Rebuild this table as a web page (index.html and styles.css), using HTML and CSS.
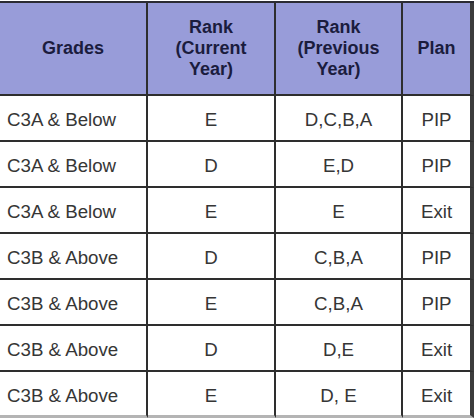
FILE: index.html
```html
<!DOCTYPE html>
<html>
<head>
<meta charset="utf-8">
<link rel="stylesheet" href="styles.css">
</head>
<body>
<table class="grid">
  <colgroup>
    <col class="c1"><col class="c2"><col class="c3"><col class="c4">
  </colgroup>
  <thead>
    <tr>
      <th>Grades</th>
      <th>Rank<br>(Current<br>Year)</th>
      <th>Rank<br>(Previous<br>Year)</th>
      <th>Plan</th>
    </tr>
  </thead>
  <tbody>
    <tr><td class="grade">C3A &amp; Below</td><td>E</td><td>D,C,B,A</td><td>PIP</td></tr>
    <tr><td class="grade">C3A &amp; Below</td><td>D</td><td>E,D</td><td>PIP</td></tr>
    <tr><td class="grade">C3A &amp; Below</td><td>E</td><td>E</td><td>Exit</td></tr>
    <tr><td class="grade">C3B &amp; Above</td><td>D</td><td>C,B,A</td><td>PIP</td></tr>
    <tr><td class="grade">C3B &amp; Above</td><td>E</td><td>C,B,A</td><td>PIP</td></tr>
    <tr><td class="grade">C3B &amp; Above</td><td>D</td><td>D,E</td><td>Exit</td></tr>
    <tr class="last"><td class="grade">C3B &amp; Above</td><td>E</td><td>D, E</td><td>Exit</td></tr>
  </tbody>
</table>
</body>
</html>
```

FILE: styles.css
```css
html, body {
  margin: 0;
  padding: 0;
  background: #ffffff;
}
body {
  padding-top: 1px;
  width: 474px;
  height: 418px;
  overflow: hidden;
  font-family: "Liberation Sans", Arial, sans-serif;
}
.grid {
  border-collapse: separate;
  border-spacing: 0;
  table-layout: fixed;
  width: 474px;
  border-top: 2px solid #2b2b33;
}
.c1 { width: 148px; }
.c2 { width: 128px; }
.c3 { width: 127px; }
.c4 { width: 71px; }

.grid th,
.grid td {
  padding: 0;
  box-sizing: border-box;
  border-right: 2px solid #2e2e2e;
  border-bottom: 2px solid #2e2e2e;
  text-align: center;
  vertical-align: middle;
}
.grid th:last-child,
.grid td:last-child {
  border-right: 4px solid #3c3c3c;
}
.grid th {
  height: 93px;
  background: #989cd9;
  color: #1b1c3e;
  font-weight: bold;
  font-size: 18px;
  line-height: 21px;
}
.grid td {
  height: 46px;
  padding-top: 3px;
  color: #363636;
  font-size: 18.7px;
  line-height: 21px;
}
.grid td.grade {
  text-align: left;
  padding-left: 7px;
}
.grid tr.last td {
  height: 46px;
  border-bottom: 3px solid #b4b4b4;
}
.grid tr.last td:last-child {
  border-right: 4px solid #3c3c3c;
}
```
